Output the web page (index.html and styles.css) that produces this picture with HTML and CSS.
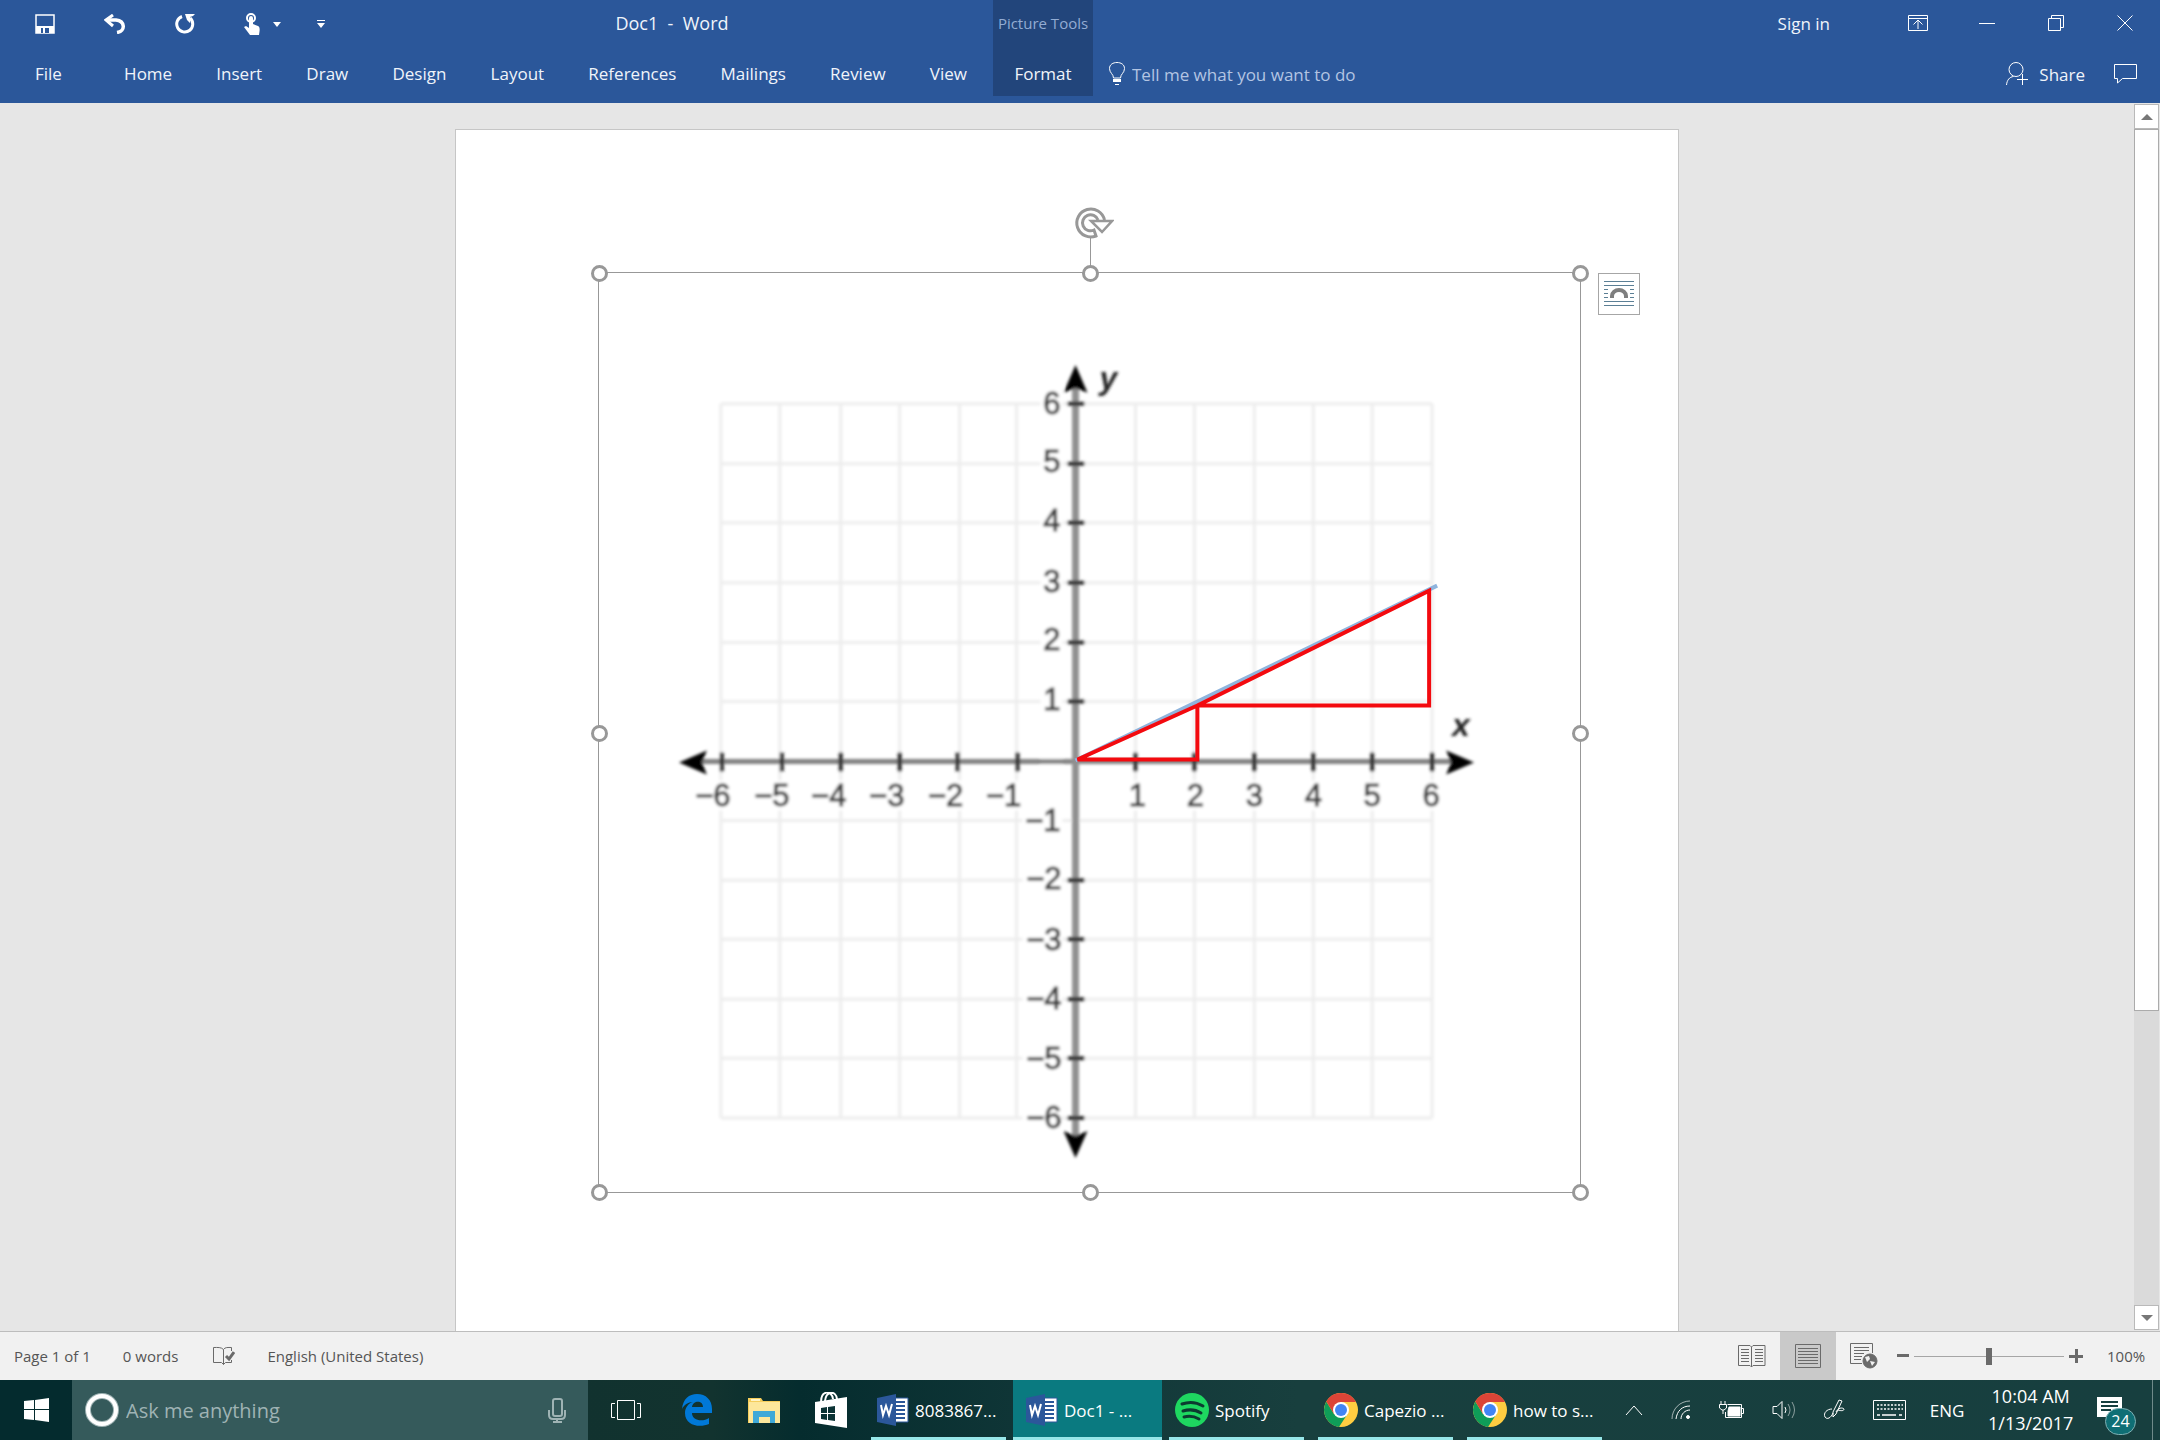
FILE: index.html
```html
<!DOCTYPE html>
<html lang="en">
<head>
<meta charset="utf-8">
<title>Doc1 - Word</title>
<link rel="stylesheet" href="styles.css">
</head>
<body>
<svg class="defs" aria-hidden="true">
  <symbol id="word" viewBox="0 0 32 32">
    <path d="M16 4h15v24H16z" fill="#fff" stroke="#2b579a"/>
    <path d="M19 8h9M19 12h9M19 16h9M19 20h9M19 24h9" stroke="#2b579a" stroke-width="2"/>
    <path d="M0 4 19 0v32L0 28z" fill="#2b579a"/>
    <path d="m4 11 2 10 3-9 3 9 3-11" fill="none" stroke="#fff" stroke-width="2"/>
  </symbol>
  <symbol id="chrome" viewBox="0 0 34 34">
    <circle cx="17" cy="17" r="17" fill="#ffcd41"/>
    <path d="M2.300 8.500A17 17 0 0 0 15 33.900L23.500 21 17 17 10 21z" fill="#0f9d58"/>
    <path d="M2.300 8.500A17 17 0 0 1 32 9H17L10 21z" fill="#db4437"/>
    <circle cx="17" cy="17" r="8" fill="#fff"/>
    <circle cx="17" cy="17" r="6" fill="#4285f4"/>
  </symbol>
</svg>

<header class="ribbon">
  <div class="titlebar">
    <div class="qat">
      <button class="icon-btn" aria-label="Save"><svg width="20" height="20" viewBox="0 0 20 20"><path d="M1 1h18v18H1z" fill="none" stroke="#fff" stroke-width="1.500"/><path d="M1 12h18v7H1z" fill="#fff"/><path d="M6 14h2v5H6zM10 14h4v5h-4z" fill="#2b579a"/></svg></button>
      <button class="icon-btn" aria-label="Undo"><svg width="22" height="20" viewBox="0 0 22 20"><path d="M9 1 2 6l7 6" fill="none" stroke="#fff" stroke-width="3"/><path d="M3 6h9c9 1 10 11 1 12.500" fill="none" stroke="#fff" stroke-width="3.500"/></svg></button>
      <button class="icon-btn" aria-label="Redo"><svg width="22" height="20" viewBox="0 0 22 20"><path d="M8 2.500A8 8 0 1 0 16 4" fill="none" stroke="#fff" stroke-width="3"/><path d="M11 0h10l-2 2-3 1v6l-3-3z" fill="#fff"/></svg></button>
      <button class="icon-btn touch" aria-label="Touch mode"><svg width="16" height="22" viewBox="0 0 16 22"><circle cx="7" cy="5" r="4" fill="none" stroke="#fff" stroke-width="2"/><path d="M5 5a2 2 0 0 1 4 0v6l5 2c2 1 2 3 1 9H6l-6-8 2-1 3 2z" fill="#fff"/></svg><svg width="8" height="5" viewBox="0 0 8 5"><path d="M0 0h8L4 5z" fill="#fff"/></svg></button>
      <button class="icon-btn more" aria-label="Customize toolbar"><svg width="8" height="8" viewBox="0 0 8 8"><path d="M0 0h8v1H0zM0 3h8L4 8z" fill="#fff"/></svg></button>
    </div>
    <h1 class="doc-title">Doc1&nbsp; -&nbsp; Word</h1>
  </div>
  <div class="context-label">Picture Tools</div>
  <div class="window-bar">
    <a class="sign-in" href="#">Sign in</a>
    <button class="win-btn" aria-label="Ribbon display options"><svg width="20" height="16" viewBox="0 0 20 16" class="line-white"><path d="M.5.5h19v15H.5zM.5 3.500h19M10 14V6M5.500 9.500 10 5l4.500 4.500"/></svg></button>
    <button class="win-btn" aria-label="Minimize"><svg width="16" height="16" viewBox="0 0 16 16" class="line-white"><path d="M0 8.500h16"/></svg></button>
    <button class="win-btn" aria-label="Restore"><svg width="16" height="16" viewBox="0 0 16 16" class="line-white"><path d="M.5 3.500h12v12H.5zM3.500 3V.5h12v12H13"/></svg></button>
    <button class="win-btn" aria-label="Close"><svg width="16" height="16" viewBox="0 0 16 16" class="line-white"><path d="m.5.5 15 15m0-15-15 15"/></svg></button>
  </div>
  <nav class="tabs">
    <a class="file" href="#">File</a><a href="#">Home</a><a href="#">Insert</a><a href="#">Draw</a><a href="#">Design</a><a href="#">Layout</a><a href="#">References</a><a href="#">Mailings</a><a href="#">Review</a><a href="#">View</a>
  </nav>
  <a class="format-tab" href="#">Format</a>
  <div class="tell-row">
    <label class="tell"><svg width="16" height="24" viewBox="0 0 16 24" class="line-white"><path d="M4.500 16c0-4-4-5-4-9.500C.5 2.500 4 .5 8 .5s7.500 2 7.500 6c0 4.500-4 5.500-4 9.500z"/><path d="M4 17h8v3H4zM6 22h4v1H6z" fill="#fff" stroke="none"/></svg><input type="text" placeholder="Tell me what you want to do" aria-label="Tell me what you want to do"></label>
    <button class="share"><svg width="22" height="24" viewBox="0 0 22 24" class="line-white"><circle cx="10" cy="7.500" r="7"/><path d="M.5 23c.5-5 3-8 7-8.500M11 17.500h11M16.500 12v11"/></svg>Share</button>
    <button class="comment" aria-label="Comments"><svg width="23" height="20" viewBox="0 0 23 20" class="line-white"><path d="M.5.5h22v14H8.500l-5 4.500v-4.500h-3z"/></svg></button>
  </div>
</header>

<main class="workspace">
  <section class="canvas">
    <article class="page">
      <figure class="picture">
        <svg class="chart" viewBox="598 272 982 920" role="img" aria-label="Coordinate plane with slope triangles">
          <defs><filter id="soft" x="-5%" y="-5%" width="110%" height="110%"><feGaussianBlur stdDeviation="1.400"/></filter></defs>
          <g filter="url(#soft)">
            <path class="grid" d="M720 403H1432M720 463H1432M720 522H1432M720 582H1432M720 642H1432M720 701H1432M720 820H1432M720 880H1432M720 939H1432M720 999H1432M720 1058H1432M720 1118H1432M720 403V1118M779 403V1118M840 403V1118M899 403V1118M959 403V1118M1016 403V1118M1135 403V1118M1194 403V1118M1254 403V1118M1313 403V1118M1372 403V1118M1432 403V1118"/>
            <g class="wipe"><path d="M1040 385h22v730h-22zM1022 800h38v330h-38zM690 780h340v30H690zM1120 780h325v30H1120z"/></g>
            <path class="axis-x" d="M700 761H1452"/>
            <path class="axis-y" d="M1075 385V1137"/>
            <path class="tick" d="M721 752V771M781 752V771M840 752V771M899 752V771M957 752V771M1017 752V771M1135 752V771M1194 752V771M1254 752V771M1313 752V771M1372 752V771M1432 752V771M1067 403H1084M1067 463H1084M1067 522H1084M1067 582H1084M1067 642H1084M1067 701H1084M1067 880H1084M1067 939H1084M1067 999H1084M1067 1058H1084M1067 1118H1084"/>
            <path d="m1075 364 12 28-12-5-12 5zM1075 1158l12-27-12 5-12-5zM678 762l28-12-5 12 5 12zM1474 762l-28-12 5 12-5 12z"/>
            <g class="num mid">
              <text x="712" y="806">−6</text><text x="771" y="806">−5</text><text x="828" y="806">−4</text><text x="886" y="806">−3</text><text x="945" y="806">−2</text><text x="1003" y="806">−1</text>
              <text x="1137" y="806">1</text><text x="1195" y="806">2</text><text x="1254" y="806">3</text><text x="1313" y="806">4</text><text x="1372" y="806">5</text><text x="1431" y="806">6</text>
            </g>
            <g class="num end">
              <text x="1060" y="413">6</text><text x="1060" y="471">5</text><text x="1060" y="530">4</text><text x="1060" y="591">3</text><text x="1060" y="649">2</text><text x="1060" y="709">1</text>
              <text x="1060" y="831">−1</text><text x="1061" y="889">−2</text><text x="1061" y="950">−3</text><text x="1061" y="1009">−4</text><text x="1061" y="1069">−5</text><text x="1061" y="1128">−6</text>
            </g>
            <g class="axis-name"><text x="1099" y="388">y</text><text x="1452" y="736">x</text></g>
          </g>
          <path d="M1075 760 1437 585" fill="none" stroke="#8fb4dd" stroke-width="4"/>
          <path class="slope" d="M1077 759 1197 705V759zM1197 705 1429 590V705z"/>
        </svg>
        <svg class="rotate" width="40" height="34" viewBox="0 0 40 34"><g fill="none" stroke="#989898" stroke-width="3"><path d="M30.500 14A14 14 0 1 0 22 30l-2-6A8 8 0 1 1 24 14"/><path d="M17 15h21l-10 11z" fill="#fff" stroke-width="2.500"/></g></svg>
        <span class="stem"></span>
        <i class="handle nw"></i><i class="handle n"></i><i class="handle ne"></i><i class="handle w"></i><i class="handle e"></i><i class="handle sw"></i><i class="handle s"></i><i class="handle se"></i>
        <button class="layout-options" aria-label="Layout Options"><svg width="32" height="28" viewBox="0 0 32 28"><path d="M1 1.500h30M1 5.500h30M1 9.500h4M27 9.500h4M1 13.500h4M27 13.500h4M1 17.500h4M27 17.500h4M1 21.500h30M1 25.500h30" stroke="#5b7f95" fill="none"/><path d="M9 18v-2a7 6 0 0 1 14 0v2" stroke="#7f7f7f" stroke-width="4" fill="none"/></svg></button>
      </figure>
    </article>
  </section>
  <div class="scrollbar">
    <button aria-label="Scroll up"><svg width="12" height="6" viewBox="0 0 12 6"><path d="m0 6 6-6 6 6z" fill="#777"/></svg></button>
    <div class="track"><div class="thumb"></div></div>
    <button aria-label="Scroll down"><svg width="12" height="6" viewBox="0 0 12 6"><path d="m0 0 6 6 6-6z" fill="#777"/></svg></button>
  </div>
</main>

<footer class="status">
  <span class="pages">Page 1 of 1</span>
  <span class="words">0 words</span>
  <button class="proof" aria-label="Proofing"><svg width="22" height="20" viewBox="0 0 22 20" fill="none" stroke="#6a6a6a"><path d="M10.500 3.500C8 1 5 1.500.5 1.500v15h8l2 2 2-2h6V14M10.500 3.500v15M10.500 3.500C12 1 15 1.500 18.500 1.500V5"/><path d="m13 10 3 3 5-7" stroke-width="3"/></svg></button>
  <span>English (United States)</span>
  <div class="views">
    <button aria-label="Read Mode"><svg width="28" height="24" viewBox="0 0 28 24" fill="none" stroke="#6a6a6a"><path d="M13.500 3 12 1.500H.5v20H12l1.500 1.500 1.500-1.500h12v-20H15zM13.500 3v20" /><path d="M3 5.500h8M3 8.500h8M3 11.500h8M3 14.500h8M3 17.500h8M17 5.500h8M17 8.500h8M17 11.500h8M17 14.500h8M17 17.500h8"/></svg></button>
    <button class="current" aria-label="Print Layout"><svg width="26" height="24" viewBox="0 0 26 24" fill="none" stroke="#6a6a6a"><path d="M.5.5h25v23H.5zM3 4.500h20M3 7.500h20M3 10.500h20M3 13.500h20M3 16.500h20M3 19.500h20"/></svg></button>
    <button aria-label="Web Layout"><svg width="28" height="26" viewBox="0 0 28 26" fill="none" stroke="#6a6a6a"><path d="M12 20.500H.5V.5h22V10M4 4.500h15M4 7.500h15M4 10.500h10M4 13.500h8M4 16.500h7"/><circle cx="20" cy="18" r="7" fill="#6a6a6a"/><path d="m15 14 4-1 1 3-3 3zM20 18l5 1-3 4z" fill="#f1f1f1" stroke="none"/></svg></button>
  </div>
  <div class="zoom">
    <button aria-label="Zoom out"><svg width="12" height="14" viewBox="0 0 12 14"><path d="M0 5h12v3H0z" fill="#6a6a6a"/></svg></button>
    <input type="range" min="0" max="100" value="50" aria-label="Zoom">
    <button aria-label="Zoom in"><svg width="14" height="14" viewBox="0 0 14 14"><path d="M0 6h14v3H0zM6 0h3v14H6z" fill="#6a6a6a"/></svg></button>
    <span>100%</span>
  </div>
</footer>

<div class="taskbar">
  <button class="start" aria-label="Start"><svg width="25" height="24" viewBox="0 0 25 24" fill="#fff"><path d="m0 3 10-1v9H0zM11 2l14-2v11H11zM0 12h10v10L0 21zM11 12h14v12l-14-2z"/></svg></button>
  <label class="search"><svg width="34" height="34" viewBox="0 0 34 34"><circle cx="17" cy="17" r="14" fill="none" stroke="#9fb3b4" stroke-width="6"/><circle cx="17" cy="17" r="14" fill="none" stroke="#fff" stroke-width="4"/></svg><input type="text" placeholder="Ask me anything" aria-label="Ask me anything"><svg width="18" height="25" viewBox="0 0 18 25" fill="none" stroke="#9fb3b4" stroke-width="2"><rect x="5" y="1" width="9" height="17" rx="2"/><path d="M1 12v5c0 3 2 4 4 4h8c2 0 4-1 4-4v-5M9 21v3M5 24h9"/></svg></label>
  <button class="task-view" aria-label="Task View"><svg width="32" height="22" viewBox="0 0 32 22" fill="none" stroke="#fff"><path d="M7.500 1.500h17v19h-17zM5 4.500H1.500v14H5M27 4.500h3.500v14H27"/></svg></button>
  <button class="pin" aria-label="Edge"><svg width="30" height="32" viewBox="0 0 30 32"><path d="M0 15C1 5 7 0 15 0c9 0 15 6 15 15v4H10c0 8 11 9 17 5v6c-9 4-24 2-24-11C3 13 7 9 11 8 6 8 2 11 0 15zM10 13h11c0-7-10-7-11 0z" fill="#0078d7"/></svg></button>
  <button class="pin" aria-label="File Explorer"><svg width="32" height="27" viewBox="0 0 32 27"><path d="M0 1h13l2 3h17v22H0z" fill="#f5cd5b"/><path d="M1 5h31v21H1z" fill="#fde79b"/><path d="M5 26V14h22v12h-5v-6H11v6z" fill="#3fa9d8"/><path d="M3 2h9v2H3z" fill="#fff3c4"/></svg></button>
  <button class="pin" aria-label="Store"><svg width="32" height="36" viewBox="0 0 32 36"><path d="M0 10 32 5v31L0 31z" fill="#fff"/><path d="M6 10c0-12 11-12 12-3M10 9c1-10 11-11 12-2" fill="none" stroke="#fff" stroke-width="2"/><path d="m6 16 6-1v6H6zM13 15l7-1v7h-7zM6 22h6v6l-6-1zM13 22h7v7l-7-1z" fill="#0b3335"/></svg></button>
  <button class="task"><svg width="32" height="32"><use href="#word"/></svg>8083867...</button>
  <button class="task active"><svg width="32" height="32"><use href="#word"/></svg>Doc1 - ...</button>
  <button class="task"><svg width="34" height="34" viewBox="0 0 34 34"><circle cx="17" cy="17" r="17" fill="#1ed760"/><path d="M7 11q11-4 21 2M8 18q10-3 18 2M9 24q8-2 15 2" fill="none" stroke="#0c3a30" stroke-width="3" stroke-linecap="round"/></svg>Spotify</button>
  <button class="task"><svg width="34" height="34"><use href="#chrome"/></svg>Capezio ...</button>
  <button class="task"><svg width="34" height="34"><use href="#chrome"/></svg>how to s...</button>
  <div class="tray">
    <div class="tray-icons">
      <button aria-label="Show hidden icons"><svg width="18" height="11" viewBox="0 0 18 11" class="line-white"><path d="m1 10 8-9 8 9"/></svg></button>
      <button aria-label="Network"><svg width="20" height="20" viewBox="0 0 20 20" class="line-white"><path d="M1 19C1 9 9 1 19 1" opacity=".6"/><path d="M5 19C6 11 11 6 19 6M10 19c0-5 4-9 9-9"/><circle cx="17" cy="17" r="1.500" fill="#fff"/></svg></button>
      <button aria-label="Battery"><svg width="25" height="18" viewBox="0 0 25 18" class="line-white"><path d="M8.500 3.500h14v13h-16V11M23 7.500h1.500v5H23"/><path d="M10 6h11v9H9v-5z" fill="#fff"/><path d="M2 0v3M6 0v3M.5 3.500h7V7L5 9H3L.5 7zM4 9v4"/></svg></button>
      <button aria-label="Volume"><svg width="24" height="20" viewBox="0 0 24 20" class="line-white"><path d="M1 6.500h4l5-5v17l-5-5H1zM13 7q2 3 0 6"/><path d="M16 4q4 6 0 12M20 2q5 8 0 16" opacity=".5"/></svg></button>
      <button aria-label="Windows Ink"><svg width="21" height="22" viewBox="0 0 21 22" class="line-white"><path d="M9 13 15 1l3 1-6 13-3 3zM8 10c-5 0-9 4-7 8 2 3 6 1 8-4M12 13c2-4 6-5 8-3 0 2-3 2-6 1"/></svg></button>
      <button aria-label="Keyboard"><svg width="33" height="20" viewBox="0 0 33 20" class="line-white"><path d="M.5.5h32v19H.5z"/><path d="M4 5h26M4 9h26" stroke-dasharray="2 1.500" stroke-width="1.500"/><path d="M4 15h3M9 15h14M26 15h3" stroke-width="1.500"/></svg></button>
    </div>
    <button class="lang">ENG</button>
    <button class="clock"><span>10:04 AM</span><span>1/13/2017</span></button>
    <button class="action" aria-label="Action Center"><svg width="25" height="26" viewBox="0 0 25 26"><path d="M0 0h25v20h-9l-5 6v-6H0z" fill="#fff"/><path d="M4 5h17M4 9h17M4 13h10" stroke="#173f3f" stroke-width="2"/></svg><span class="badge">24</span></button>
  </div>
</div>
</body>
</html>
```
FILE: styles.css
```css
* { box-sizing: border-box; }
body {
  margin: 0;
  height: 100vh;
  display: flex;
  flex-direction: column;
  overflow: hidden;
  background: #e6e6e6;
  font-family: "Open Sans", "Noto Sans", sans-serif;
}
button, input { font: inherit; color: inherit; border: 0; padding: 0; background: none; }
a { color: inherit; text-decoration: none; }
svg { display: block; flex: none; }
.defs { position: absolute; width: 0; height: 0; }
.line-white { fill: none; stroke: #fff; }

/* Ribbon */
.ribbon {
  display: grid;
  grid-template-columns: 993px 100px 1fr;
  grid-template-rows: 48px 48px;
  padding-bottom: 7px;
  background: #2b579a;
  color: #f0f4fa;
  font-size: 17px;
}
.titlebar { display: flex; align-items: center; }
.qat { display: flex; align-items: center; width: 351px; padding-left: 10px; }
.icon-btn { display: flex; align-items: center; justify-content: center; width: 70px; height: 48px; }
.icon-btn.touch { gap: 13px; width: 84px; }
.icon-btn.more { width: 33px; }
.doc-title { flex: 1; margin: 0; font-size: 18px; line-height: 46px; padding-bottom: 2px; font-weight: 400; text-align: center; }
.context-label, .format-tab { display: flex; align-items: center; justify-content: center; background: #22457b; }
.context-label { color: #93acd3; font-size: 15px; padding-bottom: 2px; }
.window-bar { display: flex; align-items: center; justify-content: flex-end; padding: 0 1px 2px 0; }
.sign-in { margin-right: 53px; }
.win-btn { display: flex; align-items: center; justify-content: center; width: 69px; height: 46px; }
.tabs { display: flex; align-items: center; justify-content: space-between; padding: 2px 26px 0 35px; }
.file { margin-right: 18px; }
.format-tab { padding-top: 2px; }
.tell-row { display: flex; align-items: center; padding: 4px 23px 0 16px; }
.tell { display: flex; align-items: center; gap: 7px; flex: 1; color: #b3c5e3; }
.tell input { width: 300px; }
.tell input::placeholder { color: #b3c5e3; opacity: 1; }
.share { display: flex; align-items: center; gap: 11px; margin-right: 29px; }

/* Document area */
.workspace { flex: 1; min-height: 0; display: flex; }
.canvas { flex: 1; overflow: hidden; padding-top: 26px; display: flex; justify-content: center; }
.page { width: 1224px; padding: 142px; background: #fff; border: 1px solid #c6c6c6; border-bottom: 0; }
.picture { position: relative; margin: 0; width: 983px; height: 921px; border: 1px solid #989898; }
.chart { width: 100%; height: 100%; }
.grid { fill: none; stroke: #ededed; stroke-width: 3; }
.wipe { fill: #fff; }
.axis-x { stroke: #808080; stroke-width: 5; }
.axis-y { stroke: #909090; stroke-width: 7; }
.tick { stroke: #2c2c2c; stroke-width: 4; }
.num { font: 31px "Liberation Sans", Arial, sans-serif; fill: #3c3c3c; stroke: #3c3c3c; stroke-width: 1px; }
.mid { text-anchor: middle; }
.end { text-anchor: end; }
.axis-name { font: italic bold 32px "Liberation Sans", Arial, sans-serif; fill: #222; }
.slope { fill: none; stroke: #f30a0f; stroke-width: 4; }
.handle { position: absolute; width: 17px; height: 17px; margin: -8px; border: 3px solid #989898; border-radius: 50%; background: #fff; }
.nw, .n, .ne { top: 0; }
.w, .e { top: 50%; }
.sw, .s, .se { top: 100%; }
.nw, .w, .sw { left: 0; }
.n, .s { left: 50%; }
.ne, .e, .se { left: 100%; }
.rotate { position: absolute; left: 50%; top: -67px; margin-left: -16px; }
.stem { position: absolute; left: 50%; top: -35px; width: 1px; height: 28px; background: #989898; }
.layout-options { position: absolute; left: 100%; top: 0; margin-left: 18px; width: 42px; height: 42px; display: flex; align-items: center; justify-content: center; background: #fff; border: 1px solid #a6a6a6; }

.scrollbar { width: 26px; padding: 1px 1px 1px 0; display: flex; flex-direction: column; }
.scrollbar button { height: 25px; display: flex; align-items: center; justify-content: center; background: #fff; border: 1px solid #b9b9b9; }
.track { flex: 1; background: #dadada; }
.thumb { height: 75%; background: #fff; border: 1px solid #ababab; }

/* Status bar */
.status { display: flex; align-items: center; height: 49px; padding: 0 15px 0 14px; border-top: 1px solid #bdbdbd; background: #f1f1f1; color: #555; font-size: 15px; }
.words { margin-left: 32px; }
.proof { margin: 0 32px 0 35px; }
.views { display: flex; align-self: stretch; margin-left: auto; }
.views button { width: 56px; display: flex; align-items: center; justify-content: center; }
.views .current { background: #c9c9c9; }
.zoom { display: flex; align-items: center; margin-left: 5px; }
.zoom span { width: 38px; margin-left: 24px; }
.zoom input { appearance: none; width: 150px; height: 18px; margin: 0 5px; background: linear-gradient(#a6a6a6, #a6a6a6) center / 100% 1px no-repeat; }
.zoom input::-webkit-slider-thumb { appearance: none; width: 6px; height: 17px; background: #6a6a6a; }

/* Taskbar */
.taskbar { display: flex; height: 60px; color: #fff; font-size: 17px; background: linear-gradient(90deg, #042b2e 0, #042b2e 3%, #11322f 27%, #12332f 33%, #052c2e 37%, #103637 48%, #183f3e 60%, #173f3f 100%); }
.taskbar button { display: flex; align-items: center; justify-content: center; }
.start { width: 72px; }
.search { width: 516px; display: flex; align-items: center; padding: 0 22px 0 13px; background: #355a5b; }
.search input { flex: 1; margin-left: 7px; font-size: 20px; }
.search input::placeholder { color: #9fb3b4; opacity: 1; }
.task-view { width: 75px; }
.pin { width: 67px; }
.taskbar .task { position: relative; width: 149px; padding: 0 6px 0 13px; gap: 6px; justify-content: flex-start; white-space: nowrap; }
.task::after { content: ""; position: absolute; left: 7px; right: 7px; bottom: 0; height: 3px; background: #97e7e9; }
.taskbar .active { background: #0a7a80; }
.taskbar .active::after { left: 0; right: 0; }
.tray { flex: 1; display: flex; align-items: center; justify-content: space-between; padding: 0 7px 0 16px; }
.tray-icons { display: flex; align-items: center; gap: 28px; }
.tray .clock { flex-direction: column; font-size: 18px; }
.clock span { line-height: 27px; }
.tray .action { position: relative; padding-right: 30px; height: 60px; border-right: 1px solid #6f8a8a; }
.badge { position: absolute; left: 8px; top: 28px; width: 31px; height: 27px; border-radius: 14px; border: 1px solid #7fb0b3; background: #0f6f75; font-size: 16px; line-height: 25px; text-align: center; }
```
